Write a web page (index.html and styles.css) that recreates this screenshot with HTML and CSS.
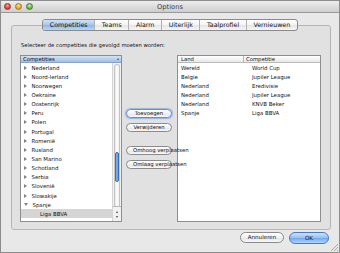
FILE: index.html
```html
<!DOCTYPE html>
<html>
<head>
    <link rel="stylesheet" href="styles.css">
</head>
<body>
    <div class="window">
        <!-- Title bar -->
        <div class="titlebar">
            <div class="lights">
                <span class="light red"></span>
                <span class="light yellow"></span>
                <span class="light green"></span>
            </div>
            <div class="title">Options</div>
        </div>

        <!-- Tabs -->
        <div class="tabs">
            <div class="tabbar">
                <span class="tab active">Competities</span>
                <span class="tab">Teams</span>
                <span class="tab">Alarm</span>
                <span class="tab">Uiterlijk</span>
                <span class="tab">Taalprofiel</span>
                <span class="tab">Vernieuwen</span>
            </div>
        </div>

        <div class="group">
            <p class="intro">Selecteer de competities die gevolgd moeten worden:</p>
            <div class="panes">
                <!-- Competition tree -->
                <div class="tree">
                    <div class="tree-head">
                        <span>Competities</span>
                        <span class="sort"></span>
                    </div>
                    <div class="tree-body">
                        <div class="rows">
                            <div class="row"><i class="arrow"></i>Nederland</div>
                            <div class="row"><i class="arrow"></i>Noord-Ierland</div>
                            <div class="row"><i class="arrow"></i>Noorwegen</div>
                            <div class="row"><i class="arrow"></i>Oekraine</div>
                            <div class="row"><i class="arrow"></i>Oostenrijk</div>
                            <div class="row"><i class="arrow"></i>Peru</div>
                            <div class="row"><i class="arrow"></i>Polen</div>
                            <div class="row"><i class="arrow"></i>Portugal</div>
                            <div class="row"><i class="arrow"></i>Romenië</div>
                            <div class="row"><i class="arrow"></i>Rusland</div>
                            <div class="row"><i class="arrow"></i>San Marino</div>
                            <div class="row"><i class="arrow"></i>Schotland</div>
                            <div class="row"><i class="arrow"></i>Serbia</div>
                            <div class="row"><i class="arrow"></i>Slovenië</div>
                            <div class="row"><i class="arrow"></i>Slowakije</div>
                            <div class="row"><i class="arrow open"></i>Spanje</div>
                            <div class="row child selected">Liga BBVA</div>
                        </div>
                        <div class="scrollbar">
                            <div class="track">
                                <div class="thumb"></div>
                            </div>
                            <div class="steppers">
                                <span class="step up"></span>
                                <span class="step down"></span>
                            </div>
                        </div>
                    </div>
                </div>

                <!-- Move buttons -->
                <div class="actions">
                    <div class="btn small focus">Toevoegen</div>
                    <div class="btn small">Verwijderen</div>
                    <div class="btn small spaced">Omhoog verplaatsen</div>
                    <div class="btn small">Omlaag verplaatsen</div>
                </div>

                <!-- Selected competitions -->
                <div class="table">
                    <div class="thead">
                        <span class="th land">Land</span>
                        <span class="th">Competitie</span>
                    </div>
                    <div class="tr"><span class="td land">Wereld</span><span class="td">World Cup</span></div>
                    <div class="tr"><span class="td land">Belgie</span><span class="td">Jupiler League</span></div>
                    <div class="tr"><span class="td land">Nederland</span><span class="td">Eredivisie</span></div>
                    <div class="tr"><span class="td land">Nederland</span><span class="td">Jupiler League</span></div>
                    <div class="tr"><span class="td land">Nederland</span><span class="td">KNVB Beker</span></div>
                    <div class="tr"><span class="td land">Spanje</span><span class="td">Liga BBVA</span></div>
                </div>
            </div>
        </div>

        <div class="footer">
            <div class="btn cancel">Annuleren</div>
            <div class="btn ok">OK</div>
        </div>

        <svg class="grip" width="8" height="8" viewBox="0 0 8 8">
            <path d="M1 8 L8 1 M4 8 L8 4 M7 8 L8 7" stroke="#9a9a9a" stroke-width="0.8"/>
        </svg>
    </div>
</body>
</html>
```

FILE: styles.css
```css
* {
    box-sizing: border-box;
}

body {
    margin: 0;
    font-family: "DejaVu Sans", sans-serif;
    color: #111;
}

.window {
    position: relative;
    width: 340px;
    height: 253px;
    border: 1px solid #8d8d8d;
    background: #e8e8e8;
    display: flex;
    flex-direction: column;
}

/* title bar */
.titlebar {
    height: 12px;
    border-bottom: 1px solid #9a9a9a;
    background: linear-gradient(#ededed, #cdcdcd);
    display: grid;
    grid-template-columns: 1fr auto 1fr;
    align-items: center;
}

.lights {
    display: flex;
    gap: 4px;
    padding-left: 2.5px;
}

.light {
    width: 7px;
    height: 7px;
    border-radius: 50%;
}

.red {
    background: radial-gradient(circle at 50% 30%, #f7a39c, #d9392f 70%);
    border: 0.5px solid #9e2a22;
}

.yellow {
    background: radial-gradient(circle at 50% 30%, #fbe09a, #e0a128 70%);
    border: 0.5px solid #a0741c;
}

.green {
    background: radial-gradient(circle at 50% 30%, #c4eeaa, #5fae3a 70%);
    border: 0.5px solid #3f7d25;
}

.title {
    font-size: 6.7px;
    color: #3b3b3b;
}

/* tabs */
.tabs {
    display: flex;
    justify-content: center;
    margin-top: 6px;
    position: relative;
    z-index: 1;
}

.tabbar {
    display: flex;
    height: 12px;
    border: 1px solid #8a8a8a;
    border-radius: 3px;
    overflow: hidden;
    background: linear-gradient(#ffffff, #f3f3f3 50%, #e4e4e4 51%, #f6f6f6);
}

.tab {
    font-size: 6.3px;
    line-height: 10px;
    padding: 0 6.6px;
    border-left: 1px solid #b1b1b1;
}

.tab:first-child {
    border-left: none;
}

.tab.active {
    background: linear-gradient(#cfe2f8, #a5c7ef 50%, #8bb6ea 51%, #b9d6f6);
}

/* group box */
.group {
    margin: -6px 8px 0 10px;
    padding: 15px 9px 7px 8px;
    border: 1px solid #b5b5b5;
    border-radius: 3px;
    background: #e1e1e1;
}

.intro {
    margin: 0 0 6px;
    padding-left: 1px;
    font-size: 5.3px;
    line-height: 8px;
}

.panes {
    display: flex;
    height: 167px;
}

/* tree */
.tree {
    width: 102px;
    border: 1px solid #8e8e8e;
    background: #fff;
    display: flex;
    flex-direction: column;
    overflow: hidden;
}

.tree-head {
    height: 7px;
    border-bottom: 1px solid #8fa3bf;
    background: linear-gradient(#d2e3f7, #9dc0ea);
    display: flex;
    align-items: center;
    padding-left: 2px;
    font-size: 5.3px;
}

.sort {
    margin-left: auto;
    margin-right: 2px;
    border-bottom: 2.5px solid #555;
    border-left: 1.8px solid transparent;
    border-right: 1.8px solid transparent;
}

.tree-body {
    flex: 1;
    display: flex;
    min-height: 0;
}

.rows {
    flex: 1;
    overflow: hidden;
}

.row {
    height: 9.15px;
    display: flex;
    align-items: center;
    gap: 4.5px;
    padding-left: 3px;
    font-size: 5.4px;
}

.row.child {
    padding-left: 19px;
}

.row.selected {
    background: #d5d5d5;
}

.arrow {
    width: 0;
    height: 0;
    border-left: 3.5px solid #848484;
    border-top: 2.5px solid transparent;
    border-bottom: 2.5px solid transparent;
}

.arrow.open {
    border-top: 3.5px solid #848484;
    border-left: 2.5px solid transparent;
    border-right: 2.5px solid transparent;
    border-bottom: none;
}

/* scrollbar */
.scrollbar {
    width: 9px;
    border-left: 1px solid #d4d4d4;
    background: #f2f2f2;
    display: flex;
    flex-direction: column;
}

.track {
    flex: 1;
    margin: 1px 1px 0;
    padding-top: 87px;
    border: 1px solid #c4c4c4;
    border-bottom: none;
    border-radius: 3.5px 3.5px 0 0;
    background: linear-gradient(90deg, #e4e4e4, #ffffff 45%, #eeeeee);
}

.thumb {
    height: 30px;
    border: 1px solid #3a6cbc;
    border-radius: 3px;
    background: linear-gradient(90deg, #4a84d6, #a9ccf3 45%, #79a9e8 70%, #3f78cc);
}

.steppers {
    height: 15px;
    border-top: 1px solid #b9b9b9;
    display: flex;
    flex-direction: column;
    align-items: center;
    justify-content: space-around;
    padding: 2px 0;
}

.step {
    width: 0;
    height: 0;
    border-left: 1.8px solid transparent;
    border-right: 1.8px solid transparent;
}

.step.up {
    border-bottom: 2.5px solid #444;
}

.step.down {
    border-top: 2.5px solid #444;
}

/* buttons */
.btn {
    border: 1px solid #8a8a8a;
    background: linear-gradient(#ffffff, #f2f2f2 50%, #e3e3e3 51%, #f8f8f8);
    text-align: center;
    white-space: nowrap;
}

.actions {
    width: 46px;
    margin: 0 5px 0 4px;
    padding-top: 54px;
    display: flex;
    flex-direction: column;
    gap: 5px;
    position: relative;
    z-index: 1;
}

.btn.small {
    height: 9px;
    border-radius: 4.5px;
    padding: 0 6px;
    font-size: 5.3px;
    line-height: 7px;
}

.btn.spaced {
    margin-top: 9px;
}

.btn.focus {
    border-color: #5f8fd6;
    box-shadow: 0 0 1px 1px rgba(95, 145, 220, 0.55);
}

/* table */
.table {
    width: 144px;
    border: 1px solid #8e8e8e;
    background: #fff;
}

.thead {
    display: flex;
    height: 7px;
    border-bottom: 1px solid #b8b8b8;
    background: linear-gradient(#ffffff, #e8e8e8);
    font-size: 5.3px;
    line-height: 6px;
}

.th {
    padding-left: 2px;
}

.th.land {
    width: 66px;
    padding-left: 3px;
    border-right: 1px solid #b8b8b8;
}

.tr {
    display: flex;
    height: 9.15px;
    align-items: center;
    font-size: 5.4px;
}

.td {
    padding-left: 8px;
}

.td.land {
    width: 66px;
    padding-left: 3px;
}

/* footer */
.footer {
    display: flex;
    justify-content: flex-end;
    align-items: flex-start;
    gap: 5px;
    padding: 2px 10px 0 0;
}

.btn.cancel {
    width: 44px;
    height: 11px;
    border-radius: 5.5px;
    font-size: 5.6px;
    line-height: 9px;
}

.btn.ok {
    width: 40px;
    height: 12px;
    border-radius: 6px;
    border-color: #4a78c2;
    background: linear-gradient(#cfe3f9, #94bff0 50%, #70a7ec 51%, #b0d5f8);
    font-size: 5.6px;
    line-height: 10px;
}

.grip {
    position: absolute;
    right: 1px;
    bottom: 1px;
}
```
